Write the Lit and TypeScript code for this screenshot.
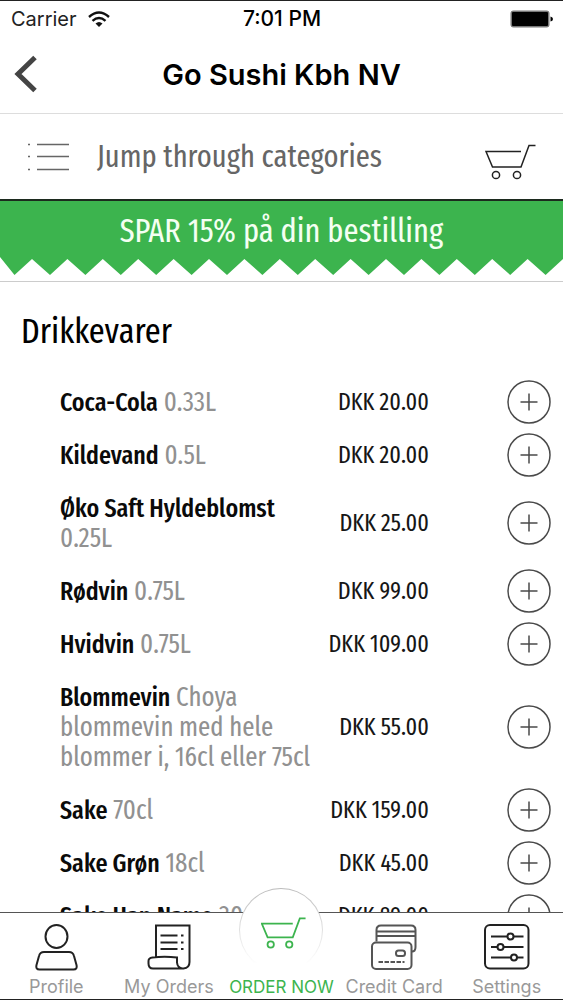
import { LitElement, html, css, svg } from "lit";
import { customElement, property } from "lit/decorators.js";

interface Drink {
  name: string;
  detail: string;
  price: string;
}

const drinks: Drink[] = [
  { name: "Coca-Cola", detail: "0.33L", price: "20.00" },
  { name: "Kildevand", detail: "0.5L", price: "20.00" },
  { name: "Øko Saft Hyldeblomst", detail: "0.25L", price: "25.00" },
  { name: "Rødvin", detail: "0.75L", price: "99.00" },
  { name: "Hvidvin", detail: "0.75L", price: "109.00" },
  { name: "Blommevin", detail: "Choya blommevin med hele blommer i, 16cl eller 75cl", price: "55.00" },
  { name: "Sake", detail: "70cl", price: "159.00" },
  { name: "Sake Grøn", detail: "18cl", price: "45.00" },
  { name: "Sake Hap Name", detail: "30cl", price: "89.00" },
];

const cart = svg`
  <path d="M36 7.5H1l6.5 15.5H36L44 1.5h6.500" />
  <circle cx="11" cy="31" r="3.600" />
  <circle cx="32" cy="31" r="3.600" />`;

const icons = {
  profile: svg`
    <ellipse cx="21.500" cy="12.500" rx="11" ry="11.500" />
    <path d="M9 28h25q4 0 5 4l2.500 9q1 4.500-3 4.500h-34q-4 0-3-4.500L4 32q1-4 5-4z" />`,
  orders: svg`
    <path d="M9 34V1.500h33.500V38q0 6-6 6.500H6q-4.500 0-4.500-5V37q0-3 4-3.500 12-1.500 24.500 0v5q.5 5.500 5.500 6" />
    <path d="M13.500 11.500h17M13.500 18.500h17M13.500 25h17M34 11.500h2.500M34 18.500h2.500M34 25h2.500" />`,
  card: svg`
    <path d="M5.500 17.500V6q0-4.500 4.500-4.500h30q4.500 0 4.500 4.500v17q0 4.500-3.500 4.500M5.500 7.500h39M5.500 12h39" />
    <rect x="1" y="18.500" width="39.500" height="26.500" rx="4" />
    <rect x="25" y="26.500" width="9" height="5.500" rx="2.500" />
    <path d="M7.500 38h26" stroke-dasharray="4.500 1.500" />`,
  settings: svg`
    <rect x="1" y="1" width="43.500" height="43.500" rx="5" />
    <path d="M7 12.500h16.500M29.500 12.500H39.500M7 23h6.500M19.500 23h20M7 33.500h20M33 33.500h6.500" />
    <circle cx="26.500" cy="12.500" r="3" />
    <circle cx="16.500" cy="23" r="3" />
    <circle cx="30" cy="33.500" r="3" />`,
};

const narrow = css`"Fira Sans Extra Condensed", "Open Sans Condensed", "Roboto Condensed", sans-serif`;

@customElement("drink-row")
class DrinkRow extends LitElement {
  @property({ attribute: false }) drink!: Drink;

  static styles = css`
    :host {
      display: grid;
      grid-template-columns: minmax(0, 1fr) 104px 122px;
      align-items: center;
      padding: 0 12px 0 60px;
      font-family: ${narrow};
      line-height: 30px;
    }
    .name {
      margin: 0;
      padding: 12px 8px 11px 0;
      color: #919191;
      font-size: 27px;
    }
    .name strong {
      color: #0a0a0a;
      font-size: 26px;
      font-weight: 500;
      line-height: 24px;
    }
    .price {
      color: #161616;
      font-size: 24px;
      text-align: right;
      white-space: nowrap;
    }
    .add {
      justify-self: end;
      width: 44px;
      height: 44px;
      padding: 0;
      border: 0;
      background: none;
      cursor: pointer;
    }
    .add svg {
      display: block;
      fill: none;
      stroke: #4a4a4a;
      stroke-width: 1.500px;
    }
  `;

  render() {
    const { name, detail, price } = this.drink;
    return html`
      <p class="name"><strong>${name}</strong> ${detail}</p>
      <span class="price">DKK ${price}</span>
      <button class="add" aria-label="Add ${name}">
        <svg width="44" height="44" viewBox="0 0 44 44" aria-hidden="true">
          <circle cx="22" cy="22" r="21" />
          <path d="M13.500 22h17M22 13.500v17" />
        </svg>
      </button>
    `;
  }
}

@customElement("app-root")
class AppRoot extends LitElement {
  static styles = css`
    :host {
      display: flex;
      flex-direction: column;
      box-sizing: border-box;
      height: 100vh;
      border-top: 1px solid #222;
      border-bottom: 1px solid #222;
      background: #fff;
      color: #000;
      font-family: Inter, "Liberation Sans", sans-serif;
      overflow: hidden;
    }
    .status {
      display: grid;
      grid-template-columns: 1fr auto 1fr;
      align-items: center;
      flex: none;
      height: 36px;
      padding: 0 10px 0 11px;
      font-size: 20px;
      line-height: 24px;
    }
    .carrier {
      display: flex;
      align-items: center;
      gap: 11px;
      color: #222;
    }
    .time {
      font-size: 21px;
      font-weight: 500;
    }
    .battery {
      justify-self: end;
    }
    .header {
      display: grid;
      grid-template-columns: 48px 1fr 48px;
      align-items: center;
      flex: none;
      height: 76px;
      border-bottom: 1px solid #ddd;
    }
    .header h1 {
      margin: 0;
      font-size: 29px;
      line-height: 34px;
      font-weight: 600;
      text-align: center;
    }
    .plain {
      display: block;
      padding: 0;
      border: 0;
      background: none;
      color: inherit;
      font: inherit;
      cursor: pointer;
    }
    .back {
      justify-self: start;
      padding: 2px 0 0 13px;
    }
    .line {
      display: block;
      fill: none;
      stroke: currentColor;
      stroke-width: 1.500px;
    }
    .jump {
      display: flex;
      align-items: center;
      justify-content: space-between;
      flex: none;
      height: 85px;
      padding: 0 27px 0 28px;
      border-bottom: 2px solid #1c2a1e;
      font-family: ${narrow};
    }
    .jump .categories {
      display: flex;
      align-items: center;
      gap: 27px;
      color: #666;
      font-size: 31px;
      line-height: 40px;
    }
    .cart {
      padding-top: 10px;
      color: #222;
    }
    .banner {
      flex: none;
      border-bottom: 1px solid #ccc;
      padding-bottom: 6px;
    }
    .banner p {
      margin: 0;
      padding: 10px 0 6px;
      background: #3cb44e;
      color: #f4fff2;
      font-family: ${narrow};
      font-size: 33px;
      line-height: 40px;
      text-align: center;
    }
    .zigzag {
      display: block;
      width: 100%;
      height: 18px;
      fill: #3cb44e;
    }
    .menu {
      flex: 1;
      min-height: 0;
      overflow: hidden;
    }
    .menu h2 {
      margin: 0;
      padding: 28px 21px 23px;
      font-family: ${narrow};
      font-size: 35px;
      line-height: 42px;
      font-weight: 400;
    }
    .menu ul {
      list-style: none;
      margin: 0;
      padding: 0;
    }
    .tabs {
      display: grid;
      grid-template-columns: repeat(5, 1fr);
      flex: none;
      height: 87px;
      box-sizing: border-box;
      border-top: 1px solid #555;
      background: #fff;
    }
    .tab {
      position: relative;
      display: flex;
      flex-direction: column;
      align-items: center;
      justify-content: space-between;
      padding-top: 11px;
      color: #999;
      font-size: 18px;
      line-height: 24px;
      text-decoration: none;
      white-space: nowrap;
    }
    .tab .line {
      color: #222;
      stroke-width: 2px;
    }
    .tab .soft {
      color: #555;
    }
    .tab.active {
      justify-content: flex-end;
      color: #3cb44e;
      font-size: 17px;
    }
    .bubble {
      position: absolute;
      top: -25px;
      left: 50%;
      box-sizing: border-box;
      width: 84px;
      height: 84px;
      margin-left: -42px;
      padding: 28px 0 0 21px;
      border-radius: 50%;
      background: linear-gradient(#fff, #fff) padding-box, linear-gradient(#bbb, #fff 90%) border-box;
      border: 1px solid transparent;
    }
    .bubble .line {
      color: #3cb44e;
    }
  `;

  private tab(label: string, icon: unknown, width: number, soft = false) {
    return html`
      <a class="tab" href="#">
        <svg class="line ${soft ? "soft" : ""}" width=${width} height="47" viewBox="0 0 ${width} 47" aria-hidden="true">${icon}</svg>
        <span>${label}</span>
      </a>
    `;
  }

  render() {
    const teeth = Array.from({ length: 15 }, (_, i) => `L${32 + i * 35.4} 2L${50 + i * 35.4} 18`).join("");
    return html`
      <div class="status">
        <span class="carrier">
          Carrier
          <svg width="22" height="17" viewBox="0 0 22 17" aria-hidden="true" fill="none" stroke="#111" stroke-width="2.400">
            <path d="M1 6Q11-3 21 6M4.500 9.800q6.500-5.600 13 0" />
            <path d="M7.500 12.500q3.500-3 7 0L11 16z" fill="#111" stroke="none" />
          </svg>
        </span>
        <span class="time">7:01 PM</span>
        <svg class="battery" width="43" height="18" viewBox="0 0 43 18" aria-hidden="true">
          <rect x=".5" y=".5" width="39" height="17" rx="3" fill="#777" />
          <rect x="2" y="2" width="36" height="14" rx="1" />
          <path d="M40.500 6.500q2.500.5 2.500 2.500t-2.500 2.500z" />
        </svg>
      </div>
      <header class="header">
        <button class="plain back" aria-label="Back">
          <svg width="24" height="38" viewBox="0 0 24 38" fill="none" stroke="#444" stroke-width="5" aria-hidden="true">
            <path d="M22 2.500L5 19l17 16.500" />
          </svg>
        </button>
        <h1>Go Sushi Kbh NV</h1>
      </header>
      <div class="jump">
        <button class="plain categories">
          <svg class="line" width="42" height="28" viewBox="0 0 42 28" aria-hidden="true">
            <path d="M9 1.500h32M9 13.500h32M9 26.500h32M0 1.500h2M0 13.500h2M0 26.500h2" />
          </svg>
          Jump through categories
        </button>
        <button class="plain cart" aria-label="Cart">
          <svg class="line" width="51" height="36" viewBox="0 0 51 36" aria-hidden="true">${cart}</svg>
        </button>
      </div>
      <div class="banner">
        <p>SPAR 15% på din bestilling</p>
        <svg class="zigzag" viewBox="0 0 563 18" preserveAspectRatio="none" aria-hidden="true">
          <path d=${`M0 0L14.500 18${teeth}L563 2V0z`} />
        </svg>
      </div>
      <main class="menu">
        <h2>Drikkevarer</h2>
        <ul>
          ${drinks.map((d) => html`<li><drink-row .drink=${d}></drink-row></li>`)}
        </ul>
      </main>
      <nav class="tabs">
        ${this.tab("Profile", icons.profile, 43)}
        ${this.tab("My Orders", icons.orders, 44)}
        <a class="tab active" href="#">
          <div class="bubble">
            <svg class="line" width="45" height="32" viewBox="0 0 51 36" aria-hidden="true">${cart}</svg>
          </div>
          <span>ORDER NOW</span>
        </a>
        ${this.tab("Credit Card", icons.card, 46, true)}
        ${this.tab("Settings", icons.settings, 46)}
      </nav>
    `;
  }
}
